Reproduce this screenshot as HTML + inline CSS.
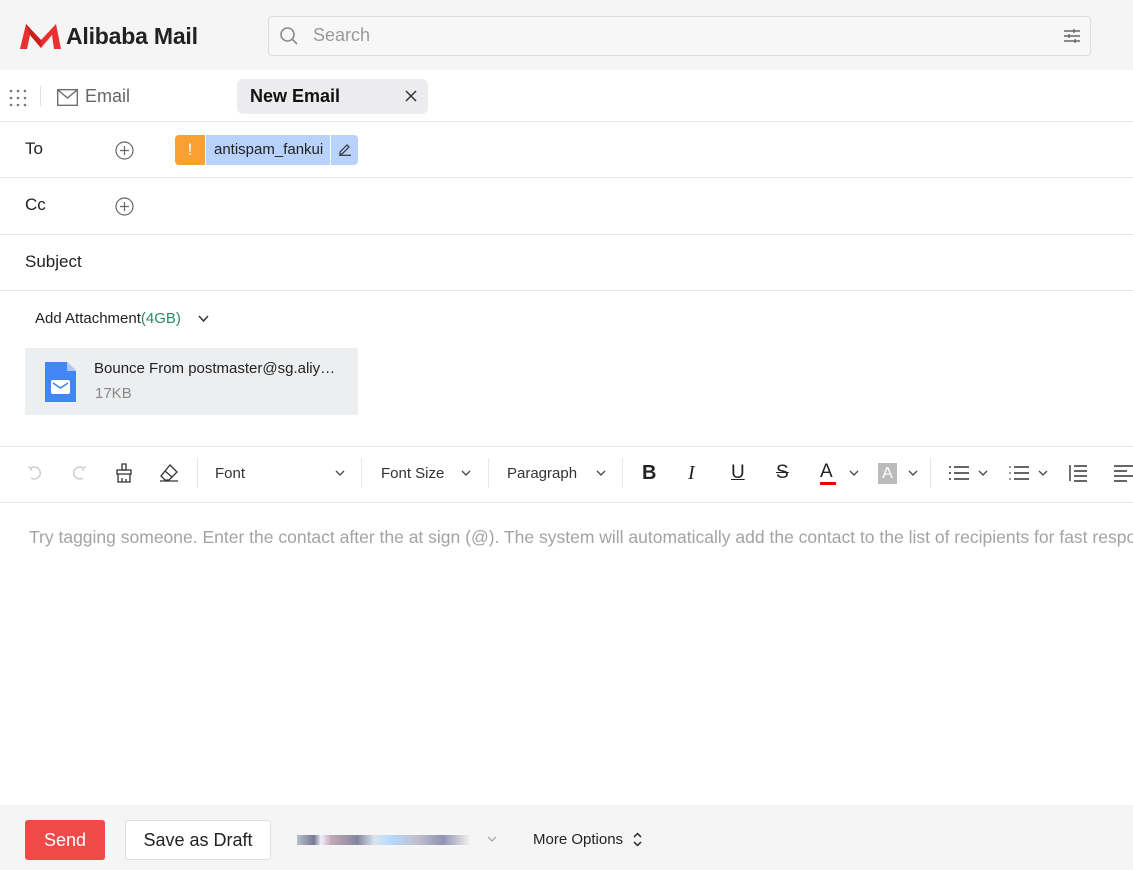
<!DOCTYPE html>
<html><head><meta charset="utf-8"><style>
*{margin:0;padding:0;box-sizing:border-box}
body{width:1133px;height:870px;overflow:hidden;background:#fff;font-family:"Liberation Sans",sans-serif;color:#222;position:relative}
.a{position:absolute}
.line{position:absolute;left:0;width:1133px;height:1px;background:#e6e6e6}
.lbl{position:absolute;left:25px;font-size:17px;color:#222}
.tb{position:absolute;top:465px;font-size:15px;color:#333}
.sep{position:absolute;top:458px;width:1px;height:30px;background:#e6e6e6}
.chev{position:absolute;font-size:11px;color:#555}
</style></head><body>
<div class="a" style="left:0;top:0;width:1133px;height:70px;background:#f5f5f5"></div>
<svg class="a" style="left:20px;top:23px" width="42" height="27" viewBox="0 0 42 27"><path d="M0 26 L6 1 L21 17 L36 1 L41 26 L34 26 L32 12 L21 25 L10 12 L7 26Z" fill="#e5312f"/><path d="M6 1 L21 17 L21 25 L10 12Z" fill="#c8201f"/></svg>
<div class="a" style="left:66px;top:23px;font-size:23px;font-weight:bold;color:#222;letter-spacing:-0.2px">Alibaba Mail</div>
<div class="a" style="left:268px;top:16px;width:823px;height:40px;border:1px solid #dcdcdc;border-radius:4px;background:#f7f7f7"></div>
<svg class="a" style="left:279px;top:26px" width="20" height="20" viewBox="0 0 20 20" fill="none" stroke="#888" stroke-width="1.6"><circle cx="8.5" cy="8.5" r="6.5"/><path d="M13.5 13.5 L18 18"/></svg>
<div class="a" style="left:313px;top:25px;font-size:18px;color:#999">Search</div>
<svg class="a" style="left:1063px;top:27px" width="18" height="18" viewBox="0 0 18 18" stroke="#666" stroke-width="1.4"><path d="M1 4H17M1 9H17M1 14H17"/><path d="M11 2V6M6 7V11M12 12V16"/></svg>
<svg class="a" style="left:9px;top:89px" width="18" height="18"><g fill="#777"><circle cx="2" cy="2" r="1.3"/><circle cx="9" cy="2" r="1.3"/><circle cx="16" cy="2" r="1.3"/><circle cx="2" cy="9" r="1.3"/><circle cx="9" cy="9" r="1.3"/><circle cx="16" cy="9" r="1.3"/><circle cx="2" cy="16" r="1.3"/><circle cx="9" cy="16" r="1.3"/><circle cx="16" cy="16" r="1.3"/></g></svg>
<div class="a" style="left:40px;top:86px;width:1px;height:20px;background:#e0e0e0"></div>
<svg class="a" style="left:57px;top:89px" width="21" height="17" viewBox="0 0 21 17" fill="none" stroke="#666" stroke-width="1.3"><rect x="0.7" y="0.7" width="19.6" height="15.6"/><path d="M1 1 L10.5 9 L20 1"/></svg>
<div class="a" style="left:85px;top:86px;font-size:18px;color:#666">Email</div>
<div class="a" style="left:237px;top:79px;width:191px;height:35px;background:#ececee;border-radius:6px"></div>
<div class="a" style="left:250px;top:86px;font-size:18px;font-weight:bold;color:#111">New Email</div>
<svg class="a" style="left:405px;top:90px" width="12" height="12" stroke="#333" stroke-width="1.5"><path d="M1 1L11 11M11 1L1 11"/></svg>
<div class="line" style="top:121px"></div>
<div class="lbl" style="top:139px">To</div>
<svg class="a" style="left:115px;top:141px" width="19" height="19" fill="none" stroke="#666" stroke-width="1.2"><circle cx="9.5" cy="9.5" r="8.5"/><path d="M9.5 5V14M5 9.5H14"/></svg>
<div class="a" style="left:175px;top:135px;width:30px;height:30px;background:#f8a032;border-radius:4px 0 0 4px;color:#fff;font-size:17px;text-align:center;line-height:30px">!</div>
<div class="a" style="left:206px;top:135px;width:124px;height:30px;background:#b8d2fb;font-size:15px;color:#222;line-height:30px;padding-left:8px">antispam_fankui</div>
<div class="a" style="left:331px;top:135px;width:27px;height:30px;background:#b8d2fb;border-radius:0 4px 4px 0"></div>
<svg class="a" style="left:338px;top:142px" width="14" height="14" fill="none" stroke="#333" stroke-width="1.2"><path d="M2 10L9 3L11 5L4 12H2Z"/><path d="M1 13.3H13"/></svg>
<div class="line" style="top:177px"></div>
<div class="lbl" style="top:195px">Cc</div>
<svg class="a" style="left:115px;top:197px" width="19" height="19" fill="none" stroke="#666" stroke-width="1.2"><circle cx="9.5" cy="9.5" r="8.5"/><path d="M9.5 5V14M5 9.5H14"/></svg>
<div class="line" style="top:234px"></div>
<div class="lbl" style="top:252px">Subject</div>
<div class="line" style="top:290px"></div>
<div class="a" style="left:35px;top:310px;font-size:15px;color:#222">Add Attachment<span style="color:#2b8a6e">(4GB)</span></div>
<svg class="a" style="left:198px;top:315px" width="11" height="8" fill="none" stroke="#333" stroke-width="1.5"><path d="M1 1L5.5 6L10 1"/></svg>
<div class="a" style="left:25px;top:348px;width:333px;height:67px;background:#edeef0;border-radius:2px"></div>
<svg class="a" style="left:45px;top:362px" width="31" height="40" viewBox="0 0 31 40"><path d="M0 0H22L31 9V40H0Z" fill="#4285f4"/><path d="M22 0V9H31Z" fill="#a8c7fa"/><rect x="6" y="18" width="19" height="14" rx="2" fill="#fff"/><path d="M8 21L15.5 26L23 21" stroke="#4285f4" stroke-width="1.6" fill="none"/></svg>
<div class="a" style="left:94px;top:360px;font-size:15px;color:#222">Bounce From postmaster@sg.aliy…</div>
<div class="a" style="left:95px;top:385px;font-size:15px;color:#888">17KB</div>
<div class="line" style="top:446px"></div>
<svg class="a" style="left:27px;top:465px" width="16" height="16" fill="none" stroke="#ccc" stroke-width="1.4"><path d="M4 3A6 6 0 1 1 4 13"/><path d="M1 2L4 3L4 6"/></svg>
<svg class="a" style="left:71px;top:465px" width="16" height="16" fill="none" stroke="#ccc" stroke-width="1.4"><path d="M12 3A6 6 0 1 0 12 13"/><path d="M15 2L12 3L12 6"/></svg>
<svg class="a" style="left:115px;top:463px" width="18" height="20" fill="none" stroke="#333" stroke-width="1.3"><path d="M7 1H11V7H7Z"/><path d="M2 7H16V11H2Z"/><path d="M3 11V19H15V11M7 19V15M11 19V16"/></svg>
<svg class="a" style="left:159px;top:464px" width="20" height="18" fill="none" stroke="#333" stroke-width="1.3"><path d="M11 1L18 8L10 16H6L2 12Z"/><path d="M6 7L13 13"/><path d="M1 17H19"/></svg>
<div class="sep" style="left:197px"></div>
<div class="tb" style="left:215px">Font</div>
<svg class="chev" style="left:335px;top:470px" width="10" height="7" fill="none" stroke="#444" stroke-width="1.3"><path d="M1 1L5 5L9 1"/></svg>
<div class="sep" style="left:361px"></div>
<div class="tb" style="left:381px">Font Size</div>
<svg class="chev" style="left:461px;top:470px" width="10" height="7" fill="none" stroke="#444" stroke-width="1.3"><path d="M1 1L5 5L9 1"/></svg>
<div class="sep" style="left:488px"></div>
<div class="tb" style="left:507px">Paragraph</div>
<svg class="chev" style="left:596px;top:470px" width="10" height="7" fill="none" stroke="#444" stroke-width="1.3"><path d="M1 1L5 5L9 1"/></svg>
<div class="sep" style="left:622px"></div>
<div class="a" style="left:642px;top:462px;font-size:20px;font-weight:bold;color:#222">B</div>
<div class="a" style="left:688px;top:462px;font-size:20px;font-style:italic;font-family:'Liberation Serif',serif;color:#222">I</div>
<div class="a" style="left:731px;top:462px;font-size:19px;text-decoration:underline;color:#222">U</div>
<div class="a" style="left:776px;top:462px;font-size:19px;text-decoration:line-through;color:#222">S</div>
<div class="a" style="left:820px;top:461px;font-size:19px;color:#222">A</div>
<div class="a" style="left:820px;top:482px;width:16px;height:3px;background:#e00"></div>
<svg class="chev" style="left:849px;top:470px" width="10" height="7" fill="none" stroke="#444" stroke-width="1.3"><path d="M1 1L5 5L9 1"/></svg>
<div class="a" style="left:878px;top:463px;width:19px;height:21px;background:#bbb;color:#fff;font-size:16px;text-align:center;line-height:21px">A</div>
<svg class="chev" style="left:908px;top:470px" width="10" height="7" fill="none" stroke="#444" stroke-width="1.3"><path d="M1 1L5 5L9 1"/></svg>
<div class="sep" style="left:930px"></div>
<svg class="a" style="left:948px;top:465px" width="22" height="16" stroke="#333" stroke-width="1.4"><path d="M6 2H21M6 8H21M6 14H21"/><path d="M1 2H3M1 8H3M1 14H3"/></svg>
<svg class="chev" style="left:978px;top:470px" width="10" height="7" fill="none" stroke="#444" stroke-width="1.3"><path d="M1 1L5 5L9 1"/></svg>
<svg class="a" style="left:1008px;top:465px" width="22" height="16" stroke="#333" stroke-width="1.4"><path d="M6 2H21M6 8H21M6 14H21"/><path d="M1 2H3M1 8H3M1 14H3" stroke-width="1"/></svg>
<svg class="chev" style="left:1038px;top:470px" width="10" height="7" fill="none" stroke="#444" stroke-width="1.3"><path d="M1 1L5 5L9 1"/></svg>
<svg class="a" style="left:1068px;top:464px" width="20" height="18" stroke="#333" stroke-width="1.4"><path d="M2 1V17M6 2H19M6 7H19M6 12H19M6 17H19"/></svg>
<svg class="a" style="left:1113px;top:464px" width="20" height="18" stroke="#333" stroke-width="1.4"><path d="M1 2H20M1 7H14M1 12H20M1 17H14"/></svg>
<div class="line" style="top:502px"></div>
<div class="a" style="left:29px;top:527px;font-size:17.5px;color:#a3a3a3;white-space:nowrap">Try tagging someone. Enter the contact after the at sign (@). The system will automatically add the contact to the list of recipients for fast response.</div>
<div class="a" style="left:0;top:805px;width:1133px;height:65px;background:#f5f5f5"></div>
<div class="a" style="left:25px;top:820px;width:80px;height:40px;background:#ef4a48;border-radius:3px;color:#fff;font-size:18px;text-align:center;line-height:40px">Send</div>
<div class="a" style="left:125px;top:820px;width:146px;height:40px;background:#fff;border:1px solid #ddd;border-radius:3px;color:#222;font-size:18px;text-align:center;line-height:38px">Save as Draft</div>
<div class="a" style="left:297px;top:835px;width:172px;height:10px;background:linear-gradient(90deg,#9ab 0,#446 10%,#eef 14%,#a89 20%,#557 35%,#cde 45%,#9cf 55%,#aab 70%,#669 85%,#eee 100%);opacity:.7"></div>
<svg class="chev" style="left:487px;top:836px" width="10" height="7" fill="none" stroke="#aaa" stroke-width="1.3"><path d="M1 1L5 5L9 1"/></svg>
<div class="a" style="left:533px;top:831px;font-size:15px;color:#222">More Options</div>
<svg class="a" style="left:633px;top:832px" width="9" height="15" fill="none" stroke="#222" stroke-width="1.5"><path d="M1 5L4.5 1.5L8 5M1 10L4.5 13.5L8 10"/></svg>
</body></html>
